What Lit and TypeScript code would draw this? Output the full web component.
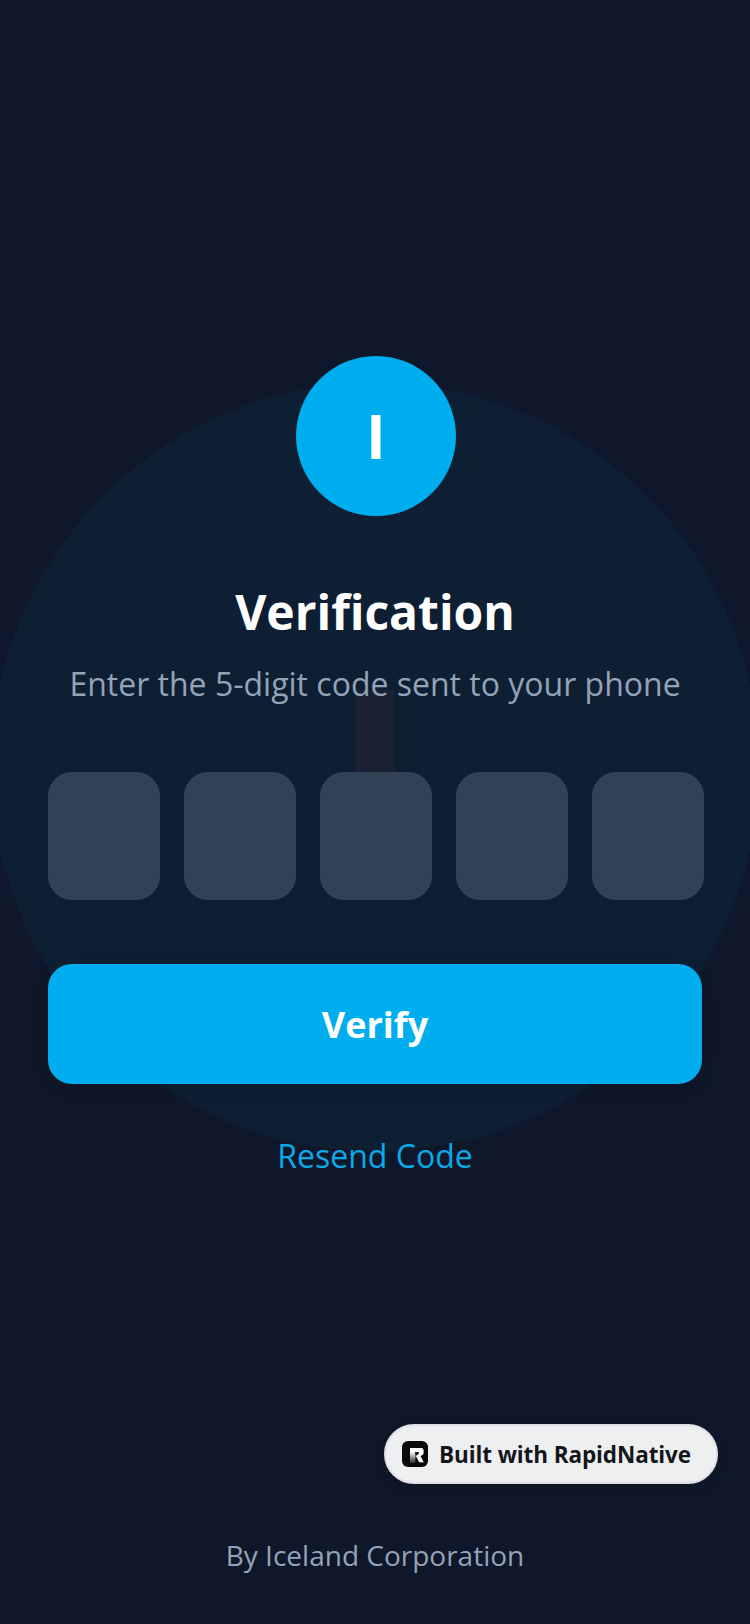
import { LitElement, html, css } from 'lit';
import { customElement } from 'lit/decorators.js';

@customElement('app-root')
export class AppRoot extends LitElement {
  static styles = css`
    :host {
      display: block;
      font-family: 'Open Sans', sans-serif;
    }

    .screen {
      position: relative;
      width: 750px;
      height: 1624px;
      overflow: hidden;
      background: #0f172a;
      display: flex;
      flex-direction: column;
      align-items: center;
      box-sizing: border-box;
      padding-top: 356px;
    }

    /* Background decoration */
    .glow {
      position: absolute;
      left: -9px;
      top: 383px;
      width: 768px;
      height: 768px;
      border-radius: 50%;
      background: #0e1f33;
    }
    .stick {
      position: absolute;
      left: 356px;
      top: 690px;
      width: 38px;
      height: 90px;
      background: #1c2233;
    }

    .logo {
      position: relative;
      margin-left: 2px;
      width: 160px;
      height: 160px;
      border-radius: 50%;
      background: #00adef;
      color: #fff;
      font-size: 60px;
      font-weight: 700;
      display: flex;
      align-items: center;
      justify-content: center;
      line-height: 1;
    }

    h1 {
      position: relative;
      margin: 64px 0 0;
      color: #fff;
      font-size: 48px;
      line-height: 64px;
      font-weight: 700;
    }

    .sub {
      position: relative;
      margin: 16px 0 0;
      color: #94a3b8;
      font-size: 32px;
      line-height: 48px;
    }

    .code {
      position: relative;
      margin: 64px 0 0 2px;
      display: flex;
      gap: 24px;
      width: 656px;
    }
    .code div {
      width: 112px;
      height: 128px;
      border-radius: 24px;
      background: #334155;
    }

    .verify {
      position: relative;
      margin-top: 64px;
      width: 654px;
      height: 120px;
      border-radius: 24px;
      background: #00adef;
      color: #fff;
      font-size: 36px;
      font-weight: 700;
      display: flex;
      align-items: center;
      justify-content: center;
      box-shadow: 0 4px 16px rgba(0, 0, 0, 0.1);
    }

    .resend {
      position: relative;
      margin-top: 48px;
      color: #0ba9e8;
      font-size: 32px;
      line-height: 48px;
    }

    .footer {
      position: absolute;
      left: 0;
      right: 0;
      bottom: 49px;
      text-align: center;
      color: #94a3b8;
      font-size: 28px;
      line-height: 40px;
    }

    .badge {
      position: absolute;
      left: 384px;
      top: 1424px;
      width: 334px;
      height: 60px;
      box-sizing: border-box;
      border: 2px solid #dfe1e6;
      border-radius: 30px;
      background: #eeeff1;
      box-shadow: 0 4px 12px rgba(0, 0, 0, 0.1);
      display: flex;
      align-items: center;
      gap: 11px;
      padding-left: 16px;
      color: #14161b;
      font-size: 22.5px;
      letter-spacing: -0.1px;
      font-weight: 700;
      white-space: nowrap;
    }
    .badge svg {
      display: block;
      flex: none;
    }
  `;

  render() {
    return html`
      <div class="screen">
        <div class="glow"></div>
        <div class="stick"></div>

        <div class="logo">I</div>
        <h1>Verification</h1>
        <p class="sub">Enter the 5-digit code sent to your phone</p>

        <div class="code">
          ${[0, 1, 2, 3, 4].map(() => html`<div></div>`)}
        </div>

        <div class="verify">Verify</div>
        <div class="resend">Resend Code</div>

        <div class="badge">
          <svg width="26" height="26" viewBox="0 0 26 26">
            <defs>
              <linearGradient id="stem" x1="0" y1="0" x2="0" y2="1">
                <stop offset="0" stop-color="#fff" />
                <stop offset="1" stop-color="#2a2b2e" />
              </linearGradient>
            </defs>
            <rect width="26" height="26" rx="6" fill="#0a0b0d" />
            <path d="M8 7h11.2a2.4 2.4 0 0 1 2.4 2.4v2.6a2 2 0 0 1-.8 1.6l-2.2 1.6 3.2 6h-4.6l-3.4-6.2 3-2.2V11H8z" fill="#fff" />
            <path d="M8 11h5l.6 4.4-.6 6.6H8z" fill="url(#stem)" />
          </svg>
          Built with RapidNative
        </div>

        <div class="footer">By Iceland Corporation</div>
      </div>
    `;
  }
}
